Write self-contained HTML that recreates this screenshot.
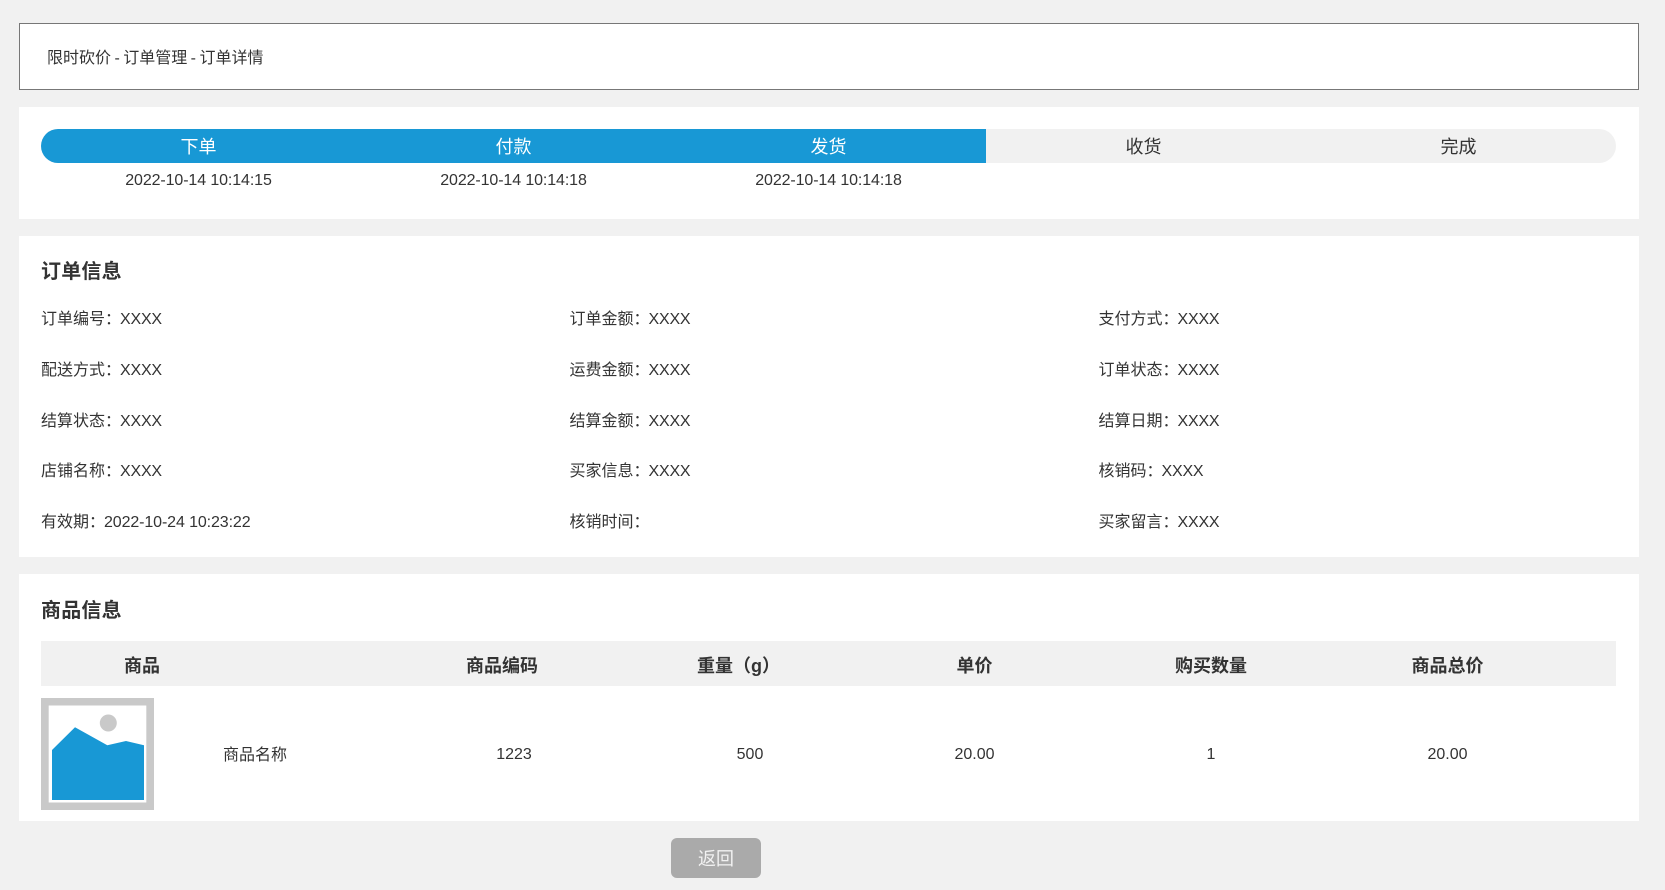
<!DOCTYPE html>
<html lang="zh-CN">
<head>
<meta charset="utf-8">
<title>订单详情</title>
<style>
html,body{margin:0;padding:0;}
body{width:1665px;height:890px;background:#f1f1f1;position:relative;overflow:hidden;font-family:"Liberation Sans","Noto Sans CJK SC",sans-serif;font-size:16px;color:#333;}
.a{position:absolute;}
.p{position:absolute;left:19px;width:1620px;background:#fff;}
.t{position:absolute;white-space:nowrap;line-height:24px;height:24px;}
.c{position:absolute;white-space:nowrap;line-height:24px;height:24px;width:300px;text-align:center;}
.h{position:absolute;white-space:nowrap;font-size:20px;font-weight:bold;line-height:28px;left:41px;letter-spacing:.2px;}
.s{font-size:18px;}
.b{font-weight:bold;font-size:18px;}
.d{letter-spacing:-.11px;}
i{font-style:normal;letter-spacing:-.2px;margin-left:-1px;}
</style>
</head>
<body>
<div class="a" style="left:19px;top:23px;width:1618px;height:65px;background:#fff;border:1px solid #777;"></div>
<div class="t" style="left:47px;top:47px;word-spacing:-1px;">限时砍价 - 订单管理 - 订单详情</div>

<div class="p" style="top:107px;height:112px;"></div>
<div class="a" style="left:41px;top:129px;width:1575px;height:34px;background:#f1f1f1;border-radius:17px;"></div>
<div class="a" style="left:41px;top:129px;width:945px;height:34px;background:#1898d5;border-radius:17px 0 0 17px;"></div>
<div class="c s" style="left:48.500px;top:135px;color:#fff;">下单</div>
<div class="c s" style="left:363.500px;top:135px;color:#fff;">付款</div>
<div class="c s" style="left:678.500px;top:135px;color:#fff;">发货</div>
<div class="c s" style="left:993.500px;top:135px;">收货</div>
<div class="c s" style="left:1308.500px;top:135px;">完成</div>
<div class="c d" style="left:48.500px;top:169px;">2022-10-14 10:14:15</div>
<div class="c d" style="left:363.500px;top:169px;">2022-10-14 10:14:18</div>
<div class="c d" style="left:678.500px;top:169px;">2022-10-14 10:14:18</div>

<div class="p" style="top:236px;height:321px;"></div>
<div class="h" style="top:258px;">订单信息</div>

<div class="t" style="left:41px;top:308px;">订单编号：<i>XXXX</i></div>
<div class="t" style="left:569.500px;top:308px;">订单金额：<i>XXXX</i></div>
<div class="t" style="left:1098.500px;top:308px;">支付方式：<i>XXXX</i></div>

<div class="t" style="left:41px;top:359px;">配送方式：<i>XXXX</i></div>
<div class="t" style="left:569.500px;top:359px;">运费金额：<i>XXXX</i></div>
<div class="t" style="left:1098.500px;top:359px;">订单状态：<i>XXXX</i></div>

<div class="t" style="left:41px;top:410px;">结算状态：<i>XXXX</i></div>
<div class="t" style="left:569.500px;top:410px;">结算金额：<i>XXXX</i></div>
<div class="t" style="left:1098.500px;top:410px;">结算日期：<i>XXXX</i></div>

<div class="t" style="left:41px;top:460px;">店铺名称：<i>XXXX</i></div>
<div class="t" style="left:569.500px;top:460px;">买家信息：<i>XXXX</i></div>
<div class="t" style="left:1098.500px;top:460px;">核销码：<i>XXXX</i></div>

<div class="t" style="left:41px;top:511px;">有效期：<span class="d" style="margin-left:-1px;">2022-10-24 10:23:22</span></div>
<div class="t" style="left:569.500px;top:511px;">核销时间：</div>
<div class="t" style="left:1098.500px;top:511px;">买家留言：<i>XXXX</i></div>

<div class="p" style="top:574px;height:247px;"></div>
<div class="h" style="top:597px;">商品信息</div>

<div class="a" style="left:41px;top:641px;width:1575px;height:45px;background:#f1f1f1;"></div>
<div class="c b" style="left:-8px;top:654px;">商品</div>
<div class="c b" style="left:352px;top:654px;">商品编码</div>
<div class="t b" style="left:697px;top:654px;">重量（g）</div>
<div class="c b" style="left:824.500px;top:654px;">单价</div>
<div class="c b" style="left:1061px;top:654px;">购买数量</div>
<div class="c b" style="left:1297.500px;top:654px;">商品总价</div>

<svg class="a" style="left:41px;top:698px;" width="113" height="112" viewBox="0 0 113 112">
<rect width="113" height="112" fill="#c9c9c9"/>
<rect x="7.700" y="7.500" width="97.600" height="97" fill="#fff"/>
<circle cx="67.300" cy="25" r="8.500" fill="#c9c9c9"/>
<path d="M11 52 L34 29.300 L66.300 47.300 L85 43 L103 47.300 L103 102 L11 102 Z" fill="#1898d5"/>
</svg>

<div class="t" style="left:223px;top:744px;">商品名称</div>
<div class="c" style="left:364px;top:743px;">1223</div>
<div class="c" style="left:600px;top:743px;">500</div>
<div class="c" style="left:824.500px;top:743px;">20.00</div>
<div class="c" style="left:1061px;top:743px;">1</div>
<div class="c" style="left:1297.500px;top:743px;">20.00</div>

<div class="a" style="left:671px;top:838px;width:90px;height:40px;background:#aaa;border-radius:6px;color:#f1f1f1;font-size:18px;line-height:42px;text-align:center;">返回</div>
</body>
</html>
